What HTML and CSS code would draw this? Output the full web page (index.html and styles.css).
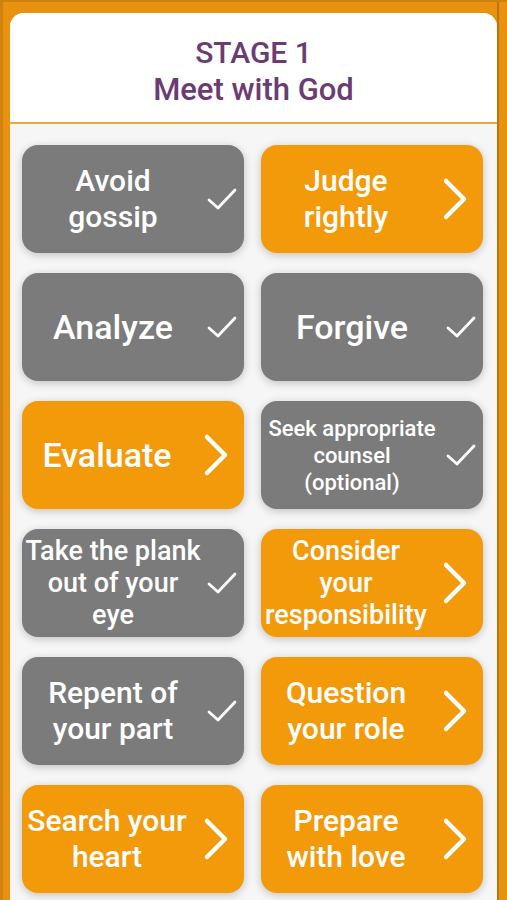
FILE: index.html
```html
<!DOCTYPE html>
<html>
	<head>
		<meta charset="utf-8">
		<meta name="viewport" content="width=device-width, initial-scale=1.0" />
		<title>Stage 1</title>
		<link rel="stylesheet" href="styles.css">
	</head>
	<body>
		<div class="frame">
			<div class="card">
				<header class="stage">
					<h1>STAGE 1</h1>
					<h2>Meet with God</h2>
				</header>
				<div class="steps">
					<div class="step done">
						<p class="label md">Avoid<br>gossip</p>
						<span class="icon"><svg width="30" height="24" viewBox="0 0 30 24"><polyline points="2,13 11,21 28,3" /></svg></span>
					</div>
					<div class="step next">
						<p class="label md">Judge<br>rightly</p>
						<span class="icon"><svg width="26" height="44" viewBox="0 0 26 44"><polyline points="4,4 22,22 4,40" /></svg></span>
					</div>
					<div class="step done">
						<p class="label big">Analyze</p>
						<span class="icon"><svg width="30" height="24" viewBox="0 0 30 24"><polyline points="2,13 11,21 28,3" /></svg></span>
					</div>
					<div class="step done">
						<p class="label big">Forgive</p>
						<span class="icon"><svg width="30" height="24" viewBox="0 0 30 24"><polyline points="2,13 11,21 28,3" /></svg></span>
					</div>
					<div class="step next">
						<p class="label big">Evaluate</p>
						<span class="icon"><svg width="26" height="44" viewBox="0 0 26 44"><polyline points="4,4 22,22 4,40" /></svg></span>
					</div>
					<div class="step done">
						<p class="label xs">Seek appropriate<br>counsel<br>(optional)</p>
						<span class="icon"><svg width="30" height="24" viewBox="0 0 30 24"><polyline points="2,13 11,21 28,3" /></svg></span>
					</div>
					<div class="step done">
						<p class="label sm">Take the plank<br>out of your<br>eye</p>
						<span class="icon"><svg width="30" height="24" viewBox="0 0 30 24"><polyline points="2,13 11,21 28,3" /></svg></span>
					</div>
					<div class="step next">
						<p class="label sm">Consider<br>your<br>responsibility</p>
						<span class="icon"><svg width="26" height="44" viewBox="0 0 26 44"><polyline points="4,4 22,22 4,40" /></svg></span>
					</div>
					<div class="step done">
						<p class="label md">Repent of<br>your part</p>
						<span class="icon"><svg width="30" height="24" viewBox="0 0 30 24"><polyline points="2,13 11,21 28,3" /></svg></span>
					</div>
					<div class="step next">
						<p class="label md">Question<br>your role</p>
						<span class="icon"><svg width="26" height="44" viewBox="0 0 26 44"><polyline points="4,4 22,22 4,40" /></svg></span>
					</div>
					<div class="step next">
						<p class="label md">Search your<br>heart</p>
						<span class="icon"><svg width="26" height="44" viewBox="0 0 26 44"><polyline points="4,4 22,22 4,40" /></svg></span>
					</div>
					<div class="step next">
						<p class="label md">Prepare<br>with love</p>
						<span class="icon"><svg width="26" height="44" viewBox="0 0 26 44"><polyline points="4,4 22,22 4,40" /></svg></span>
					</div>
				</div>
			</div>
		</div>
	</body>
</html>
```

FILE: styles.css
```css
html,
body,
h1,
h2,
p {
	margin: 0;
	padding: 0;
}

html,
body {
	height: 100%;
	overflow: hidden;
}

body {
	background: #e9920f;
	font-family: Roboto, "Liberation Sans", sans-serif;
}

.frame {
	height: 100%;
	box-sizing: border-box;
	padding: 13px 10px 0 10px;
	box-shadow: inset 3px 2px 0 #cf8210, inset -8px 0 0 #e9920f, inset -10px 0 0 #b9760f;
}

.card {
	height: 100%;
	background: #f6f6f6;
	border-radius: 14px 14px 0 0;
	overflow: hidden;
}

/* titre */
.stage {
	background: #fff;
	padding: 21px 0 14px;
	border-bottom: 2px solid #eba73e;
	text-align: center;
	color: #6b3c73;
}

.stage h1,
.stage h2 {
	font-size: 30px;
	line-height: 37px;
	font-weight: 500;
}

.stage h2 {
	font-size: 31px;
}

/* boutons */
.steps {
	display: grid;
	grid-template-columns: 222px 222px;
	grid-auto-rows: 108px;
	column-gap: 17px;
	row-gap: 20px;
	padding: 21px 14px 0 12px;
}

.step {
	display: flex;
	align-items: center;
	padding-right: 4px;
	border-radius: 16px;
	color: #fff;
	box-shadow: 0 2px 8px rgba(0, 0, 0, 0.22);
}

.done {
	background: #7b7b7b;
}

.next {
	background: #f39a0b;
}

.label {
	flex: 1;
	text-align: center;
	font-weight: 500;
	white-space: nowrap;
}

.big {
	font-size: 34px;
	line-height: 40px;
}

.md {
	font-size: 30px;
	line-height: 36px;
}

.sm {
	font-size: 27px;
	line-height: 32px;
}

.xs {
	font-size: 22px;
	line-height: 27px;
}

.icon {
	display: flex;
	justify-content: center;
	align-items: center;
}

.done .icon {
	width: 36px;
}

.next .icon {
	width: 48px;
}

.icon polyline {
	fill: none;
	stroke: #fff;
	stroke-linecap: round;
	stroke-linejoin: round;
}

.done .icon polyline {
	stroke-width: 2.8;
}

.next .icon polyline {
	stroke-width: 4.5;
}
```
